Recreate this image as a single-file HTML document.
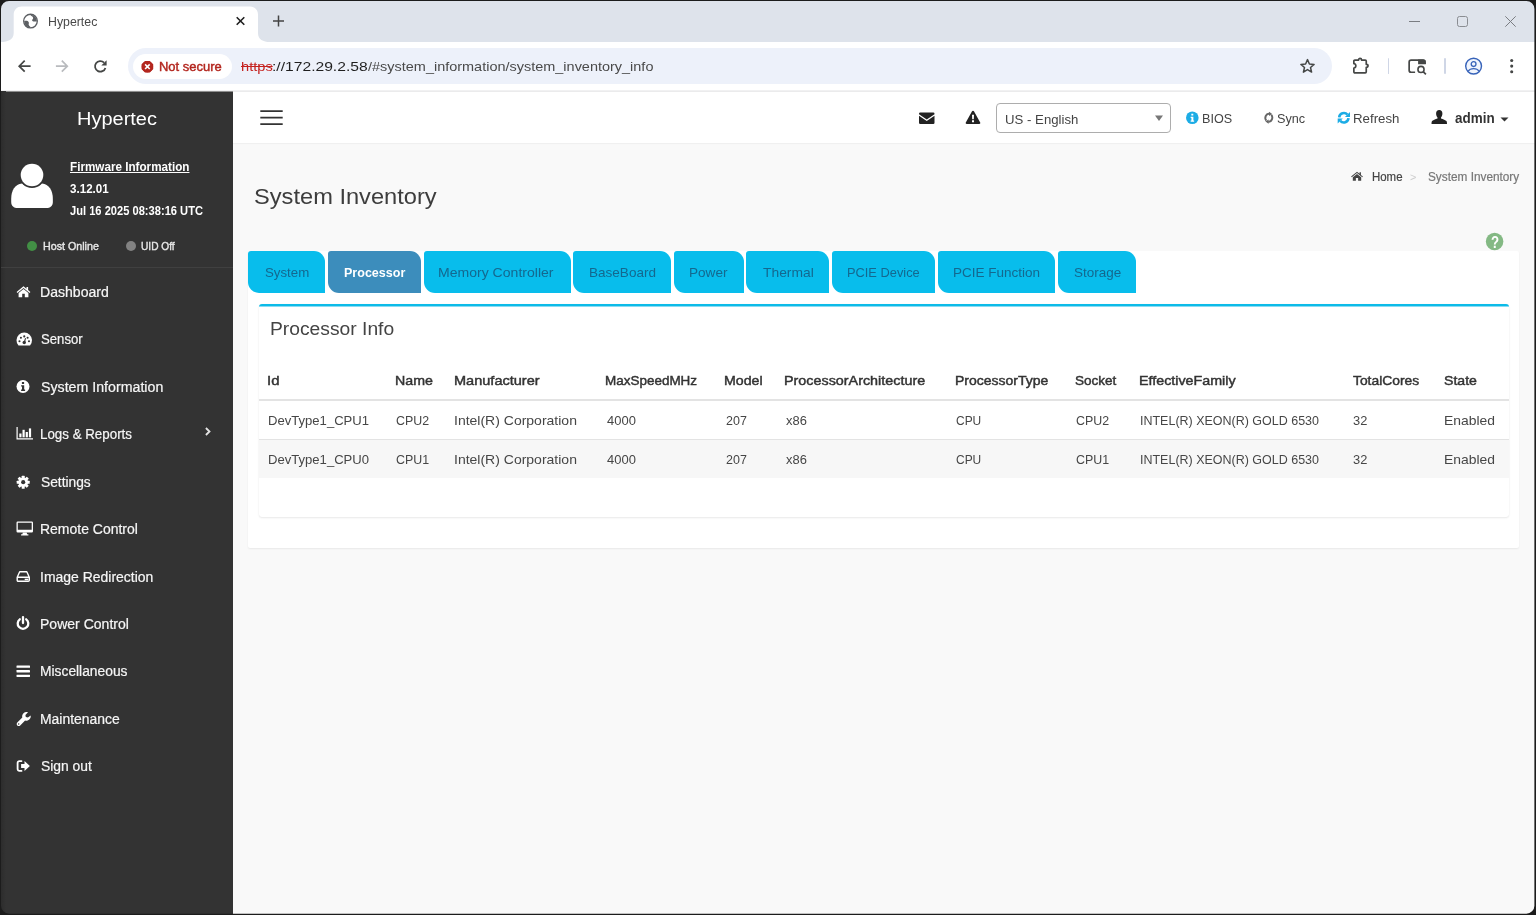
<!DOCTYPE html>
<html lang="en"><head><meta charset="utf-8"><title>Hypertec</title>
<style>
*{box-sizing:border-box;margin:0;padding:0}
html,body{width:1536px;height:915px;overflow:hidden;background:#101010}
body{font-family:"Liberation Sans",sans-serif;position:relative}
#win{will-change:transform;position:absolute;left:0;top:0;width:1536px;height:915px;border-radius:0;overflow:hidden;background:#f9f9f9}
.a{position:absolute}
.t{position:absolute;white-space:nowrap;line-height:0;transform-origin:0 50%;display:block}
.t i{display:inline-block;width:0;height:30px}
svg{position:absolute;overflow:visible}
.tab{position:absolute;top:251px;height:41.5px;background:#08bdec;border-radius:3px 11px 0 11px}
</style></head><body>
<div id="win">
<!-- browser chrome -->
<div class="a" style="left:0;top:0;width:1536px;height:42px;background:#dee3eb"></div>
<div class="a" style="left:0;top:42px;width:1536px;height:50px;background:#fff"></div>
<div class="a" style="left:0;top:90px;width:1536px;height:1px;background:#f1f1f2"></div>
<div class="a" style="left:0;top:91px;width:1536px;height:1px;background:#ebebec"></div>
<!-- active tab -->
<svg style="left:0;top:0" width="300" height="43" viewBox="0 0 300 43"><path d="M1 42 C8 42 13.700 39.500 13.700 33 V14.500 C13.700 10 17.200 6.500 21.700 6.500 H250 C254.500 6.500 258 10 258 14.500 V33 C258 39.500 263 42 270 42 V43 H1Z" fill="#fff"/></svg>
<!-- globe -->
<svg style="left:23px;top:13px" width="15" height="16" viewBox="0.000 -0.640 16.000 17.067"><circle cx="8" cy="8" r="7.300" fill="#fff" stroke="#5c5f63" stroke-width="1.400"/><path d="M7.500 1.200 C8.500 2.500 10.500 2.800 10.800 4.300 C11.100 5.800 9.300 6.300 9.800 7.600 C10.300 8.800 12.500 8 14.800 8.500 A6.800 6.800 0 0 0 7.500 1.200Z" fill="#5c5f63"/><path d="M1.200 8.200 C3 7.400 5.200 7.600 6 9 C6.800 10.400 5.500 11.200 6.300 12.400 C7 13.500 8 13.800 8.600 14.800 A6.800 6.800 0 0 1 1.200 8.200Z" fill="#5c5f63"/></svg>
<!-- tab close -->
<svg style="left:236px;top:16px" width="9" height="10" viewBox="0.000 -0.500 9.000 10.000"><path d="M0.700 0.700 L8.300 8.300 M8.300 0.700 L0.700 8.300" stroke="#1f1f1f" stroke-width="1.600" fill="none"/></svg>
<!-- new tab plus -->
<svg style="left:273px;top:15px" width="11" height="12" viewBox="0.000 -0.500 11.000 12.000"><path d="M5.500 0 V11 M0 5.500 H11" stroke="#444" stroke-width="1.500" fill="none"/></svg>
<!-- window controls -->
<svg style="left:1409px;top:20px" width="11" height="3" viewBox="0.000 0.000 11.000 3.000"><path d="M0 1.500 H11" stroke="#7a7d82" stroke-width="1"/></svg>
<svg style="left:1457px;top:16px" width="11" height="11" viewBox="0.000 0.000 11.000 11.000"><rect x="0.500" y="0.500" width="10" height="10" rx="2" fill="none" stroke="#8a8d92" stroke-width="1"/></svg>
<svg style="left:1505px;top:16px" width="11" height="11" viewBox="0.000 0.000 11.000 11.000"><path d="M0.300 0.300 L10.700 10.700 M10.700 0.300 L0.300 10.700" stroke="#7a7d82" stroke-width="1" fill="none"/></svg>
<!-- nav: back, forward, reload -->
<svg style="left:18px;top:59px" width="13" height="14" viewBox="0.000 -0.700 13.000 14.000"><path d="M12.600 6.500 H1.600 M6.700 1 L1.200 6.500 L6.700 12" stroke="#454746" stroke-width="1.700" fill="none"/></svg>
<svg style="left:55px;top:59px" width="14" height="14" viewBox="-0.500 -0.700 14.000 14.000"><path d="M0.400 6.500 H11.400 M6.300 1 L11.800 6.500 L6.300 12" stroke="#b9bbbe" stroke-width="1.700" fill="none"/></svg>
<svg style="left:94px;top:59px" width="13" height="15" viewBox="0.000 -0.300 13.000 15.000"><path d="M10.050 3.250 A5.300 5.300 0 1 0 11.400 8.600" stroke="#454746" stroke-width="1.800" fill="none"/><path d="M7.300 6.200 H12.600 V0.900Z" fill="#454746"/></svg>
<!-- omnibox -->
<div class="a" style="left:128px;top:48px;width:1204px;height:36px;border-radius:18px;background:#edf1fa"></div>
<div class="a" style="left:132.500px;top:53.500px;width:99px;height:25px;border-radius:12.500px;background:#fff"></div>
<svg style="left:141px;top:60px" width="13" height="13" viewBox="-0.433 -0.758 14.083 14.083"><path d="M3.900 0.200 H9.100 L12.800 3.900 V9.100 L9.100 12.800 H3.900 L0.200 9.100 V3.900Z" fill="#b3261e"/><circle cx="6.500" cy="6.500" r="6.200" fill="#b3261e"/><path d="M4 4 L9 9 M9 4 L4 9" stroke="#fff" stroke-width="1.700"/></svg>
<!-- star -->
<svg style="left:1299px;top:58px" width="17" height="16" viewBox="-0.500 0.000 17.000 16.000"><path d="M8 1.600 L9.900 6 L14.600 6.400 L11 9.500 L12.100 14.100 L8 11.600 L3.900 14.100 L5 9.500 L1.400 6.400 L6.100 6Z" fill="none" stroke="#454746" stroke-width="1.500" stroke-linejoin="round"/></svg>
<!-- extensions puzzle -->
<svg style="left:1352px;top:57px" width="18" height="18" viewBox="0.000 0.000 18.000 18.000"><path d="M2.850 3.050 H6.550 C6.550 0.900 9.550 0.900 9.550 3.050 H13.250 a1 1 0 0 1 1 1 V7.300 C16.600 7.300 16.600 10.300 14.250 10.300 V14.850 a1 1 0 0 1 -1 1 H2.850 a1 1 0 0 1 -1 -1 V11 C4.500 11 4.500 6.600 1.850 6.600 V4.050 a1 1 0 0 1 1 -1Z" fill="none" stroke="#454746" stroke-width="1.700" stroke-linejoin="round"/></svg>
<div class="a" style="left:1387.700px;top:58px;width:1.600px;height:16px;background:#cfd6e6;border-radius:1px"></div>
<!-- tab search -->
<svg style="left:1408px;top:59px" width="19" height="17" viewBox="0.000 0.000 19.000 17.000"><path d="M7.100 13.250 H3.150 a2 2 0 0 1 -2 -2 V3.150 a2 2 0 0 1 2 -2 H15 a2 2 0 0 1 2 2 V5" fill="none" stroke="#454746" stroke-width="1.700"/><path d="M10.100 0.400 H15.500 a2.300 2.300 0 0 1 2.300 2.300 V5.300 H10.100Z" fill="#454746"/><circle cx="13" cy="10.400" r="3.050" fill="none" stroke="#454746" stroke-width="1.600"/><path d="M15.200 12.600 L17.900 15.300" stroke="#454746" stroke-width="1.700"/></svg>
<div class="a" style="left:1444.300px;top:58px;width:1.600px;height:16px;background:#cfd6e6;border-radius:1px"></div>
<!-- profile -->
<svg style="left:1464px;top:57px" width="19" height="19" viewBox="-0.600 -0.100 19.000 19.000"><circle cx="9" cy="9" r="7.900" fill="#f1f5fd" stroke="#3763b9" stroke-width="1.400"/><circle cx="9" cy="7" r="2.400" fill="#f1f5fd" stroke="#3763b9" stroke-width="1.300"/><path d="M3.300 14.200 C4.800 12.200 6.800 11.500 9 11.500 C11.200 11.500 13.200 12.200 14.700 14.200" fill="none" stroke="#3763b9" stroke-width="1.300"/></svg>
<!-- menu dots -->
<svg style="left:1509px;top:58px" width="5" height="16" viewBox="-0.700 -0.600 5.000 16.000"><circle cx="2" cy="1.900" r="1.550" fill="#454746"/><circle cx="2" cy="7.500" r="1.550" fill="#454746"/><circle cx="2" cy="13.100" r="1.550" fill="#454746"/></svg>
<!-- sidebar -->
<div class="a" style="left:0;top:91px;width:232.500px;height:824px;background:#333"></div>
<div class="a" style="left:0;top:91px;width:232.500px;height:1px;background:#8e8e8e"></div>
<div class="a" style="left:0;top:91px;width:6px;height:824px;background:linear-gradient(90deg,#2b2b2b,#333)"></div>
<div class="a" style="left:0;top:267px;width:232.500px;height:1px;background:#404040"></div>
<!-- user avatar -->
<svg style="left:10px;top:162px" width="44" height="47" viewBox="0.000 0.000 44.000 47.000"><path d="M1.200 37 C1.200 28 5 22.500 12 21.500 H32 C39 22.500 42.850 28 42.850 37 V40 C42.850 44 40 46.100 36.500 46.100 H7.500 C4 46.100 1.200 44 1.200 40Z" fill="#fff"/><circle cx="22" cy="13" r="13" fill="#333"/><circle cx="22" cy="13" r="11.300" fill="#fff"/></svg>
<!-- status dots -->
<div class="a" style="left:27px;top:240.500px;width:10px;height:10px;border-radius:5px;background:#428f45"></div>
<div class="a" style="left:125.500px;top:240.500px;width:10px;height:10px;border-radius:5px;background:#828282"></div>
<!-- menu icons -->
<!-- home -->
<svg style="left:16px;top:286px" width="15" height="12" viewBox="-0.500 0.000 15.000 12.000"><path d="M7 0.200 L10 2.800 V1 H11.600 V4.100 L13.900 6.100 L13.100 7 L7 1.900 L0.900 7 L0.100 6.100Z" fill="#fff"/><path d="M2.100 6.900 L7 2.900 L11.900 6.900 V11.300 H8.300 V7.800 H5.700 V11.300 H2.100Z" fill="#fff"/></svg>
<!-- tachometer -->
<svg style="left:16px;top:333px" width="16" height="13" viewBox="-0.500 -0.500 16.000 13.000"><path d="M2 12 A7.750 7.750 0 1 1 13.500 12Z" fill="#fff"/><circle cx="3" cy="7.700" r="1.050" fill="#333"/><circle cx="4.400" cy="4.300" r="1.050" fill="#333"/><circle cx="7.750" cy="2.900" r="1.050" fill="#333"/><circle cx="11.100" cy="4.300" r="1.050" fill="#333"/><circle cx="12.500" cy="7.700" r="1.050" fill="#333"/><circle cx="7.750" cy="9" r="1.700" fill="#333"/><path d="M7.300 8.500 L8.600 4.400 L9.500 4.700 L8.500 8.900Z" fill="#333"/></svg>
<!-- info-circle -->
<svg style="left:16px;top:380px" width="14" height="13" viewBox="-0.500 0.000 14.000 13.000"><circle cx="6.500" cy="6.500" r="6.500" fill="#fff"/><path d="M5.400 2 H7.600 V3.900 H5.400Z M4.600 5.200 H7.700 V9.500 H8.600 V10.900 H4.600 V9.500 H5.500 V6.600 H4.600Z" fill="#333"/></svg>
<!-- bar chart -->
<svg style="left:16px;top:427px" width="17" height="13" viewBox="-0.500 0.000 17.000 13.000"><path d="M0 0 H1.200 V11.300 H16.500 V12.500 H0Z" fill="#fff"/><rect x="2.800" y="6.500" width="2.200" height="3.800" fill="#fff"/><rect x="6" y="2.800" width="2.200" height="7.500" fill="#fff"/><rect x="9.200" y="5" width="2.200" height="5.300" fill="#fff"/><rect x="12.400" y="1.400" width="2.200" height="8.900" fill="#fff"/></svg>
<!-- chevron -->
<svg style="left:204px;top:426px" width="8" height="11" viewBox="0.000 0.000 8.000 11.000"><path d="M1.900 2 L5.500 5.500 L1.900 9" stroke="#e4e4e4" stroke-width="1.800" fill="none"/></svg>
<!-- cog -->
<svg style="left:16px;top:475px" width="14" height="14" viewBox="-7.200 -7.200 14.000 14.000"><g fill="#fff"><circle r="4.800"/><rect x="-1.500" y="-6.500" width="3" height="13" rx="0.500"/><rect x="-1.500" y="-6.500" width="3" height="13" rx="0.500" transform="rotate(45)"/><rect x="-1.500" y="-6.500" width="3" height="13" rx="0.500" transform="rotate(90)"/><rect x="-1.500" y="-6.500" width="3" height="13" rx="0.500" transform="rotate(135)"/></g><circle r="2.100" fill="#333"/></svg>
<!-- desktop -->
<svg style="left:16px;top:521px" width="17" height="15" viewBox="-0.500 -0.500 17.000 15.000"><path d="M1.200 0 H15.300 A1.200 1.200 0 0 1 16.500 1.200 V9.800 A1.200 1.200 0 0 1 15.300 11 H1.200 A1.200 1.200 0 0 1 0 9.800 V1.200 A1.200 1.200 0 0 1 1.200 0Z M1.300 1.300 V8.300 H15.200 V1.300Z" fill="#fff" fill-rule="evenodd"/><path d="M6.300 11 H10.200 L10.600 12.800 H11.900 V14 H4.600 V12.800 H5.900Z" fill="#fff"/></svg>
<!-- hdd-o -->
<svg style="left:16px;top:571px" width="14" height="11" viewBox="-0.500 0.000 14.000 11.000"><path d="M3.200 0.700 H10.300 L12.800 6.200 V9.300 A1 1 0 0 1 11.800 10.300 H1.700 A1 1 0 0 1 0.700 9.300 V6.200Z M0.800 6.300 H12.700" fill="none" stroke="#fff" stroke-width="1.400" stroke-linejoin="round"/><rect x="8.200" y="7.700" width="3.600" height="1.500" fill="#fff"/></svg>
<!-- power-off -->
<svg style="left:16px;top:616px" width="14" height="15" viewBox="-0.500 0.000 14.000 15.000"><path d="M3.300 3.300 A5.300 5.300 0 1 0 9.700 3.300" fill="none" stroke="#fff" stroke-width="2.300" stroke-linecap="round"/><path d="M6.500 1.100 V7" stroke="#fff" stroke-width="2.300" stroke-linecap="round"/></svg>
<!-- bars -->
<svg style="left:16px;top:665px" width="14" height="12" viewBox="-0.500 -0.500 14.000 12.000"><rect x="0" y="0" width="13.500" height="2.300" rx="0.400" fill="#fff"/><rect x="0" y="4.600" width="13.500" height="2.300" rx="0.400" fill="#fff"/><rect x="0" y="9.200" width="13.500" height="2.300" rx="0.400" fill="#fff"/></svg>
<!-- wrench -->
<svg style="left:16px;top:712px" width="15" height="14" viewBox="-0.500 0.000 15.000 14.000"><path d="M14.200 3.400 C14.600 5.600 13.300 7.800 11.100 8.500 C10.200 8.800 9.300 8.700 8.600 8.500 L3.700 13.400 C2.900 14.200 1.600 14.200 0.800 13.400 C0 12.600 0 11.300 0.800 10.500 L5.800 5.600 C5.400 4.100 5.800 2.400 7 1.200 C8.200 0 10 -0.300 11.500 0.300 L8.900 2.900 L9.300 5 L11.400 5.400Z" fill="#fff"/><circle cx="2.200" cy="12" r="0.750" fill="#333"/></svg>
<!-- sign-out -->
<svg style="left:16px;top:760px" width="14" height="12" viewBox="-0.500 0.000 14.000 12.000"><path d="M5 1.100 H2.900 A1.800 1.800 0 0 0 1.100 2.900 V9.100 A1.800 1.800 0 0 0 2.900 10.900 H5" fill="none" stroke="#fff" stroke-width="1.800" stroke-linecap="round"/><path d="M4.600 4 H8 V1 L13.400 6 L8 11 V8 H4.600Z" fill="#fff"/></svg>
<!-- app header -->
<div class="a" style="left:232.500px;top:92px;width:1304px;height:51px;background:#fff;box-shadow:0 1px 1px rgba(0,0,0,.035)"></div>
<!-- hamburger -->
<svg style="left:260px;top:109px" width="24" height="17" viewBox="0.000 0.000 24.000 17.000"><path d="M0.300 2.100 H22.700 M0.300 8.700 H22.700 M0.300 15.200 H22.700" stroke="#333" stroke-width="1.800" fill="none"/></svg>
<!-- envelope -->
<svg style="left:919px;top:112px" width="16" height="12" viewBox="0.000 -0.500 16.000 12.000"><path d="M1.200 0 H14.300 A1.200 1.200 0 0 1 15.500 1.200 V1.700 L7.750 7 L0 1.700 V1.200 A1.200 1.200 0 0 1 1.200 0Z" fill="#222"/><path d="M0 3.300 L7.750 8.500 L15.500 3.300 V10.300 A1.200 1.200 0 0 1 14.300 11.500 H1.200 A1.200 1.200 0 0 1 0 10.300Z" fill="#222"/></svg>
<!-- warning -->
<svg style="left:965px;top:110px" width="16" height="14" viewBox="-0.500 -0.500 16.000 14.000"><path d="M7.500 0.300 C8 0.300 8.400 0.600 8.600 1 L14.700 12 C15.100 12.700 14.600 13.400 13.800 13.400 H1.200 C0.400 13.400 -0.100 12.700 0.300 12 L6.400 1 C6.600 0.600 7 0.300 7.500 0.300Z" fill="#222"/><path d="M6.500 4.300 H8.500 L8.300 8.800 H6.700Z M6.500 9.800 H8.500 V11.700 H6.500Z" fill="#fff"/></svg>
<!-- language select -->
<div class="a" style="left:996px;top:103px;width:174.500px;height:30px;border:1px solid #adadad;border-radius:4px;background:#fff"></div>
<svg style="left:1155px;top:115px" width="8" height="6" viewBox="0.000 -0.500 8.000 6.000"><path d="M0 0 H8 L4 5.500Z" fill="#777"/></svg>
<!-- BIOS info icon -->
<svg style="left:1186px;top:111px" width="13" height="14" viewBox="0.000 -0.516 13.413 14.444"><circle cx="6.500" cy="6.500" r="6.500" fill="#1cace5"/><path d="M5.500 2.200 H7.500 V4 H5.500Z M4.800 5.300 H7.600 V9.400 H8.400 V10.700 H4.800 V9.400 H5.600 V6.600 H4.800Z" fill="#fff"/></svg>
<!-- sync icon -->
<svg style="left:1263px;top:112px" width="11" height="12" viewBox="-0.800 0.000 11.000 12.000"><path d="M5.600 1.900 A3.500 4 0 0 0 2.500 8.600" fill="none" stroke="#666" stroke-width="1.900"/><path d="M5.200 -0.200 L8.400 1.900 L5.200 4.100Z" fill="#666"/><path d="M4.400 9.600 A3.500 4 0 0 0 7.500 2.900" fill="none" stroke="#666" stroke-width="1.900"/><path d="M4.800 11.700 L1.600 9.600 L4.800 7.400Z" fill="#666"/></svg>
<!-- refresh icon -->
<svg style="left:1337px;top:111px" width="14" height="13" viewBox="-0.700 -0.600 14.000 13.000"><path d="M1.500 5.700 A4.700 4.700 0 0 1 9.700 3" fill="none" stroke="#1cace5" stroke-width="2.600"/><path d="M12.300 0.300 V5.400 H7.200Z" fill="#1cace5"/><path d="M10.800 6.600 A4.700 4.700 0 0 1 2.600 9.300" fill="none" stroke="#1cace5" stroke-width="2.600"/><path d="M0 12 V6.900 H5.100Z" fill="#1cace5"/></svg>
<!-- user glyph -->
<svg style="left:1431px;top:110px" width="16" height="14" viewBox="-0.500 0.000 16.000 14.000"><path d="M7.750 0 C9.800 0 10.900 1.500 10.900 3.500 C10.900 5.200 10.300 6.600 9.500 7.400 V8.400 C11.500 9.200 14.200 10 15 11 C15.400 11.700 15.500 12.800 15.500 14 H0 C0 12.800 0.100 11.700 0.500 11 C1.300 10 4 9.200 6 8.400 V7.400 C5.200 6.600 4.600 5.200 4.600 3.500 C4.600 1.500 5.700 0 7.750 0Z" fill="#222"/></svg>
<svg style="left:1500px;top:117px" width="9" height="5" viewBox="-0.500 -0.500 9.000 5.000"><path d="M0 0 H8 L4 4Z" fill="#333"/></svg>
<!-- breadcrumb home -->
<svg style="left:1351px;top:171px" width="12" height="10" viewBox="0.000 -0.605 14.000 12.105" preserveAspectRatio="none"><path d="M7 0.200 L10 2.800 V1 H11.600 V4.100 L13.900 6.100 L13.100 7 L7 1.900 L0.900 7 L0.100 6.100Z" fill="#444"/><path d="M2.100 6.900 L7 2.900 L11.900 6.900 V11.300 H8.300 V7.800 H5.700 V11.300 H2.100Z" fill="#444"/></svg>
<!-- help icon -->
<svg style="left:1485px;top:232px" width="19" height="19" viewBox="-0.600 -0.500 19.000 19.000"><circle cx="9" cy="9" r="8.750" fill="#84b984"/></svg>
<!-- outer white box -->
<div class="a" style="left:248px;top:251px;width:1271px;height:297px;background:#fff;border-radius:2px;box-shadow:0 1px 2px rgba(0,0,0,.07)"></div>
<!-- tabs -->
<div class="tab" style="left:248px;width:77px"></div>
<div class="tab" style="left:327.500px;width:93.500px;background:#3c8dbc"></div>
<div class="tab" style="left:423.500px;width:147px"></div>
<div class="tab" style="left:573px;width:98.300px"></div>
<div class="tab" style="left:673.800px;width:70px"></div>
<div class="tab" style="left:746.300px;width:83px"></div>
<div class="tab" style="left:831.800px;width:103.200px"></div>
<div class="tab" style="left:937.500px;width:117.500px"></div>
<div class="tab" style="left:1057.500px;width:78.700px"></div>
<!-- inner box -->
<div class="a" style="left:258.500px;top:304px;width:1250.500px;height:213px;background:#fff;border-top:2px solid #0cbbe8;border-radius:3px;box-shadow:0 1px 2px rgba(0,0,0,.09), 0 0 1px rgba(0,0,0,.06)"></div>
<div class="a" style="left:259.500px;top:306px;width:1248.500px;height:1px;background:#8adcf3"></div>
<!-- table lines -->
<div class="a" style="left:259px;top:398.700px;width:1249.500px;height:2px;background:#e3e3e3"></div>
<div class="a" style="left:259px;top:438.500px;width:1249.500px;height:1px;background:#e3e3e3"></div>
<div class="a" style="left:259px;top:439.500px;width:1249.500px;height:38px;background:#f7f7f7"></div>
<!-- text -->
<span class="t" style="left:48.00px;top:-4.00px;font-size:12px;color:#484848;transform:scaleX(1.0267);"><i></i>Hypertec</span>
<span class="t" style="left:159.34px;top:41.00px;font-size:13.5px;color:#b3261e;transform:scaleX(0.9597);-webkit-text-stroke:.45px #b3261e"><i></i>Not secure</span>
<span class="t" style="left:241.00px;top:41.00px;font-size:13.5px;color:#c5221f;transform:scaleX(1.0841);text-decoration:line-through"><i></i>https</span>
<span class="t" style="left:272.34px;top:41.00px;font-size:13.5px;color:#1f1f1f;transform:scaleX(1.1584);"><i></i>://172.29.2.58</span>
<span class="t" style="left:367.60px;top:41.00px;font-size:13.5px;color:#4a4a4a;transform:scaleX(1.0716);"><i></i>/#system_information/system_inventory_info</span>
<span class="t" style="left:76.93px;top:95.00px;font-size:18.7px;color:#fff;transform:scaleX(1.0690);"><i></i>Hypertec</span>
<span class="t" style="left:69.50px;top:141.00px;font-size:13px;color:#fff;transform:scaleX(0.8987);font-weight:700;text-decoration:underline"><i></i>Firmware Information</span>
<span class="t" style="left:69.50px;top:163.00px;font-size:13px;color:#fff;transform:scaleX(0.8924);font-weight:700;"><i></i>3.12.01</span>
<span class="t" style="left:69.50px;top:185.00px;font-size:13px;color:#fff;transform:scaleX(0.8559);font-weight:700;"><i></i>Jul 16 2025 08:38:16 UTC</span>
<span class="t" style="left:43.20px;top:220.00px;font-size:11.8px;color:#e8e8e8;transform:scaleX(0.9070);-webkit-text-stroke:.4px #e8e8e8"><i></i>Host Online</span>
<span class="t" style="left:141.20px;top:220.00px;font-size:11.8px;color:#e8e8e8;transform:scaleX(0.8611);-webkit-text-stroke:.4px #e8e8e8"><i></i>UID Off</span>
<span class="t" style="left:40.00px;top:267.00px;font-size:14px;color:#f6f6f6;transform:scaleX(1.0045);-webkit-text-stroke:.2px #f6f6f6"><i></i>Dashboard</span>
<span class="t" style="left:41.00px;top:314.00px;font-size:14px;color:#f6f6f6;transform:scaleX(0.9397);-webkit-text-stroke:.2px #f6f6f6"><i></i>Sensor</span>
<span class="t" style="left:41.00px;top:362.00px;font-size:14px;color:#f6f6f6;transform:scaleX(1.0141);-webkit-text-stroke:.2px #f6f6f6"><i></i>System Information</span>
<span class="t" style="left:40.05px;top:409.00px;font-size:14px;color:#f6f6f6;transform:scaleX(0.9529);-webkit-text-stroke:.2px #f6f6f6"><i></i>Logs &amp; Reports</span>
<span class="t" style="left:41.00px;top:457.00px;font-size:14px;color:#f6f6f6;transform:scaleX(0.9835);-webkit-text-stroke:.2px #f6f6f6"><i></i>Settings</span>
<span class="t" style="left:40.00px;top:504.00px;font-size:14px;color:#f6f6f6;transform:scaleX(0.9981);-webkit-text-stroke:.2px #f6f6f6"><i></i>Remote Control</span>
<span class="t" style="left:40.00px;top:552.00px;font-size:14px;color:#f6f6f6;transform:scaleX(0.9971);-webkit-text-stroke:.2px #f6f6f6"><i></i>Image Redirection</span>
<span class="t" style="left:40.00px;top:599.00px;font-size:14px;color:#f6f6f6;transform:scaleX(1.0018);-webkit-text-stroke:.2px #f6f6f6"><i></i>Power Control</span>
<span class="t" style="left:40.01px;top:646.00px;font-size:14px;color:#f6f6f6;transform:scaleX(0.9862);-webkit-text-stroke:.2px #f6f6f6"><i></i>Miscellaneous</span>
<span class="t" style="left:40.00px;top:694.00px;font-size:14px;color:#f6f6f6;transform:scaleX(0.9952);-webkit-text-stroke:.2px #f6f6f6"><i></i>Maintenance</span>
<span class="t" style="left:41.00px;top:741.00px;font-size:14px;color:#f6f6f6;transform:scaleX(0.9906);-webkit-text-stroke:.2px #f6f6f6"><i></i>Sign out</span>
<span class="t" style="left:1005.42px;top:94.00px;font-size:13.5px;color:#444;transform:scaleX(0.9780);"><i></i>US - English</span>
<span class="t" style="left:1202.07px;top:92.80px;font-size:13.5px;color:#444;transform:scaleX(0.9342);"><i></i>BIOS</span>
<span class="t" style="left:1277.20px;top:92.80px;font-size:13.5px;color:#444;transform:scaleX(0.9385);"><i></i>Sync</span>
<span class="t" style="left:1353.02px;top:92.80px;font-size:13.5px;color:#444;transform:scaleX(0.9834);"><i></i>Refresh</span>
<span class="t" style="left:1455.40px;top:92.80px;font-size:14.3px;color:#333;transform:scaleX(0.9403);font-weight:700;"><i></i>admin</span>
<span class="t" style="left:1371.60px;top:150.60px;font-size:12px;color:#444;transform:scaleX(0.9525);-webkit-text-stroke:.2px #444"><i></i>Home</span>
<span class="t" style="left:1409.80px;top:150.60px;font-size:11px;color:#ccc;transform:scaleX(0.9833);"><i></i>&gt;</span>
<span class="t" style="left:1427.60px;top:150.60px;font-size:12px;color:#777;transform:scaleX(0.9838);-webkit-text-stroke:.2px #777"><i></i>System Inventory</span>
<span class="t" style="left:253.74px;top:173.70px;font-size:22.3px;color:#3d3d3d;transform:scaleX(1.0604);"><i></i>System Inventory</span>
<span class="t" style="left:1490.90px;top:218.00px;font-size:17px;color:#fff;transform:scaleX(0.7800);font-weight:700;"><i></i>?</span>
<span class="t" style="left:264.75px;top:247.25px;font-size:13.5px;color:#14688f;transform:scaleX(0.9830);"><i></i>System</span>
<span class="t" style="left:343.50px;top:247.25px;font-size:13.5px;color:#fff;transform:scaleX(0.9284);font-weight:700;"><i></i>Processor</span>
<span class="t" style="left:438.21px;top:247.25px;font-size:13.5px;color:#14688f;transform:scaleX(1.0404);"><i></i>Memory Controller</span>
<span class="t" style="left:588.50px;top:247.25px;font-size:13.5px;color:#14688f;transform:scaleX(1.0033);"><i></i>BaseBoard</span>
<span class="t" style="left:688.99px;top:247.25px;font-size:13.5px;color:#14688f;transform:scaleX(1.0061);"><i></i>Power</span>
<span class="t" style="left:763.00px;top:247.25px;font-size:13.5px;color:#14688f;transform:scaleX(1.0250);"><i></i>Thermal</span>
<span class="t" style="left:847.05px;top:247.25px;font-size:13.5px;color:#14688f;transform:scaleX(0.9498);"><i></i>PCIE Device</span>
<span class="t" style="left:952.75px;top:247.25px;font-size:13.5px;color:#14688f;transform:scaleX(0.9996);"><i></i>PCIE Function</span>
<span class="t" style="left:1073.75px;top:247.25px;font-size:13.5px;color:#14688f;transform:scaleX(0.9995);"><i></i>Storage</span>
<span class="t" style="left:270.13px;top:305.00px;font-size:18px;color:#444;transform:scaleX(1.0701);"><i></i>Processor Info</span>
<span class="t" style="left:267.08px;top:354.50px;font-size:13.4px;color:#333;transform:scaleX(1.1162);-webkit-text-stroke:.45px #333"><i></i>Id</span>
<span class="t" style="left:394.89px;top:354.50px;font-size:13.4px;color:#333;transform:scaleX(1.0606);-webkit-text-stroke:.45px #333"><i></i>Name</span>
<span class="t" style="left:453.61px;top:354.50px;font-size:13.4px;color:#333;transform:scaleX(1.0850);-webkit-text-stroke:.45px #333"><i></i>Manufacturer</span>
<span class="t" style="left:605.44px;top:354.50px;font-size:13.4px;color:#333;transform:scaleX(1.0056);-webkit-text-stroke:.45px #333"><i></i>MaxSpeedMHz</span>
<span class="t" style="left:724.14px;top:354.50px;font-size:13.4px;color:#333;transform:scaleX(1.0593);-webkit-text-stroke:.45px #333"><i></i>Model</span>
<span class="t" style="left:784.13px;top:354.50px;font-size:13.4px;color:#333;transform:scaleX(1.0716);-webkit-text-stroke:.45px #333"><i></i>ProcessorArchitecture</span>
<span class="t" style="left:954.90px;top:354.50px;font-size:13.4px;color:#333;transform:scaleX(1.0454);-webkit-text-stroke:.45px #333"><i></i>ProcessorType</span>
<span class="t" style="left:1075.20px;top:354.50px;font-size:13.4px;color:#333;transform:scaleX(1.0093);-webkit-text-stroke:.45px #333"><i></i>Socket</span>
<span class="t" style="left:1139.13px;top:354.50px;font-size:13.4px;color:#333;transform:scaleX(1.0669);-webkit-text-stroke:.45px #333"><i></i>EffectiveFamily</span>
<span class="t" style="left:1352.50px;top:354.50px;font-size:13.4px;color:#333;transform:scaleX(1.0341);-webkit-text-stroke:.45px #333"><i></i>TotalCores</span>
<span class="t" style="left:1444.40px;top:354.50px;font-size:13.4px;color:#333;transform:scaleX(1.0513);-webkit-text-stroke:.45px #333"><i></i>State</span>
<span class="t" style="left:267.52px;top:394.50px;font-size:13.3px;color:#464646;transform:scaleX(0.9838);"><i></i>DevType1_CPU1</span>
<span class="t" style="left:396.25px;top:394.50px;font-size:13.3px;color:#464646;transform:scaleX(0.9323);"><i></i>CPU2</span>
<span class="t" style="left:453.95px;top:394.50px;font-size:13.3px;color:#464646;transform:scaleX(1.0527);"><i></i>Intel(R) Corporation</span>
<span class="t" style="left:606.75px;top:394.50px;font-size:13.3px;color:#464646;transform:scaleX(0.9748);"><i></i>4000</span>
<span class="t" style="left:725.50px;top:394.50px;font-size:13.3px;color:#464646;transform:scaleX(0.9385);"><i></i>207</span>
<span class="t" style="left:785.50px;top:394.50px;font-size:13.3px;color:#464646;transform:scaleX(0.9718);"><i></i>x86</span>
<span class="t" style="left:956.25px;top:394.50px;font-size:13.3px;color:#464646;transform:scaleX(0.8991);"><i></i>CPU</span>
<span class="t" style="left:1075.50px;top:394.50px;font-size:13.3px;color:#464646;transform:scaleX(0.9323);"><i></i>CPU2</span>
<span class="t" style="left:1139.56px;top:394.50px;font-size:13.3px;color:#464646;transform:scaleX(0.9390);"><i></i>INTEL(R) XEON(R) GOLD 6530</span>
<span class="t" style="left:1352.80px;top:394.50px;font-size:13.3px;color:#464646;transform:scaleX(0.9656);"><i></i>32</span>
<span class="t" style="left:1443.66px;top:394.50px;font-size:13.3px;color:#464646;transform:scaleX(1.0442);"><i></i>Enabled</span>
<span class="t" style="left:267.52px;top:433.75px;font-size:13.3px;color:#464646;transform:scaleX(0.9838);"><i></i>DevType1_CPU0</span>
<span class="t" style="left:396.25px;top:433.75px;font-size:13.3px;color:#464646;transform:scaleX(0.9323);"><i></i>CPU1</span>
<span class="t" style="left:453.95px;top:433.75px;font-size:13.3px;color:#464646;transform:scaleX(1.0527);"><i></i>Intel(R) Corporation</span>
<span class="t" style="left:606.75px;top:433.75px;font-size:13.3px;color:#464646;transform:scaleX(0.9748);"><i></i>4000</span>
<span class="t" style="left:725.50px;top:433.75px;font-size:13.3px;color:#464646;transform:scaleX(0.9385);"><i></i>207</span>
<span class="t" style="left:785.50px;top:433.75px;font-size:13.3px;color:#464646;transform:scaleX(0.9718);"><i></i>x86</span>
<span class="t" style="left:956.25px;top:433.75px;font-size:13.3px;color:#464646;transform:scaleX(0.8991);"><i></i>CPU</span>
<span class="t" style="left:1075.50px;top:433.75px;font-size:13.3px;color:#464646;transform:scaleX(0.9323);"><i></i>CPU1</span>
<span class="t" style="left:1139.56px;top:433.75px;font-size:13.3px;color:#464646;transform:scaleX(0.9390);"><i></i>INTEL(R) XEON(R) GOLD 6530</span>
<span class="t" style="left:1352.80px;top:433.75px;font-size:13.3px;color:#464646;transform:scaleX(0.9656);"><i></i>32</span>
<span class="t" style="left:1443.66px;top:433.75px;font-size:13.3px;color:#464646;transform:scaleX(1.0442);"><i></i>Enabled</span>
<svg style="left:0;top:0" width="1536" height="915" viewBox="0 0 1536 915"><path fill-rule="evenodd" fill="#1c1c1c" d="M0 0 H1536 V915 H0Z M9 1 A8 8 0 0 0 1 9 V905.700 A8 8 0 0 0 9 913.700 H1526.400 A8 8 0 0 0 1534.400 905.700 V9 A8 8 0 0 0 1526.400 1Z"/></svg>
</div>
</body></html>
